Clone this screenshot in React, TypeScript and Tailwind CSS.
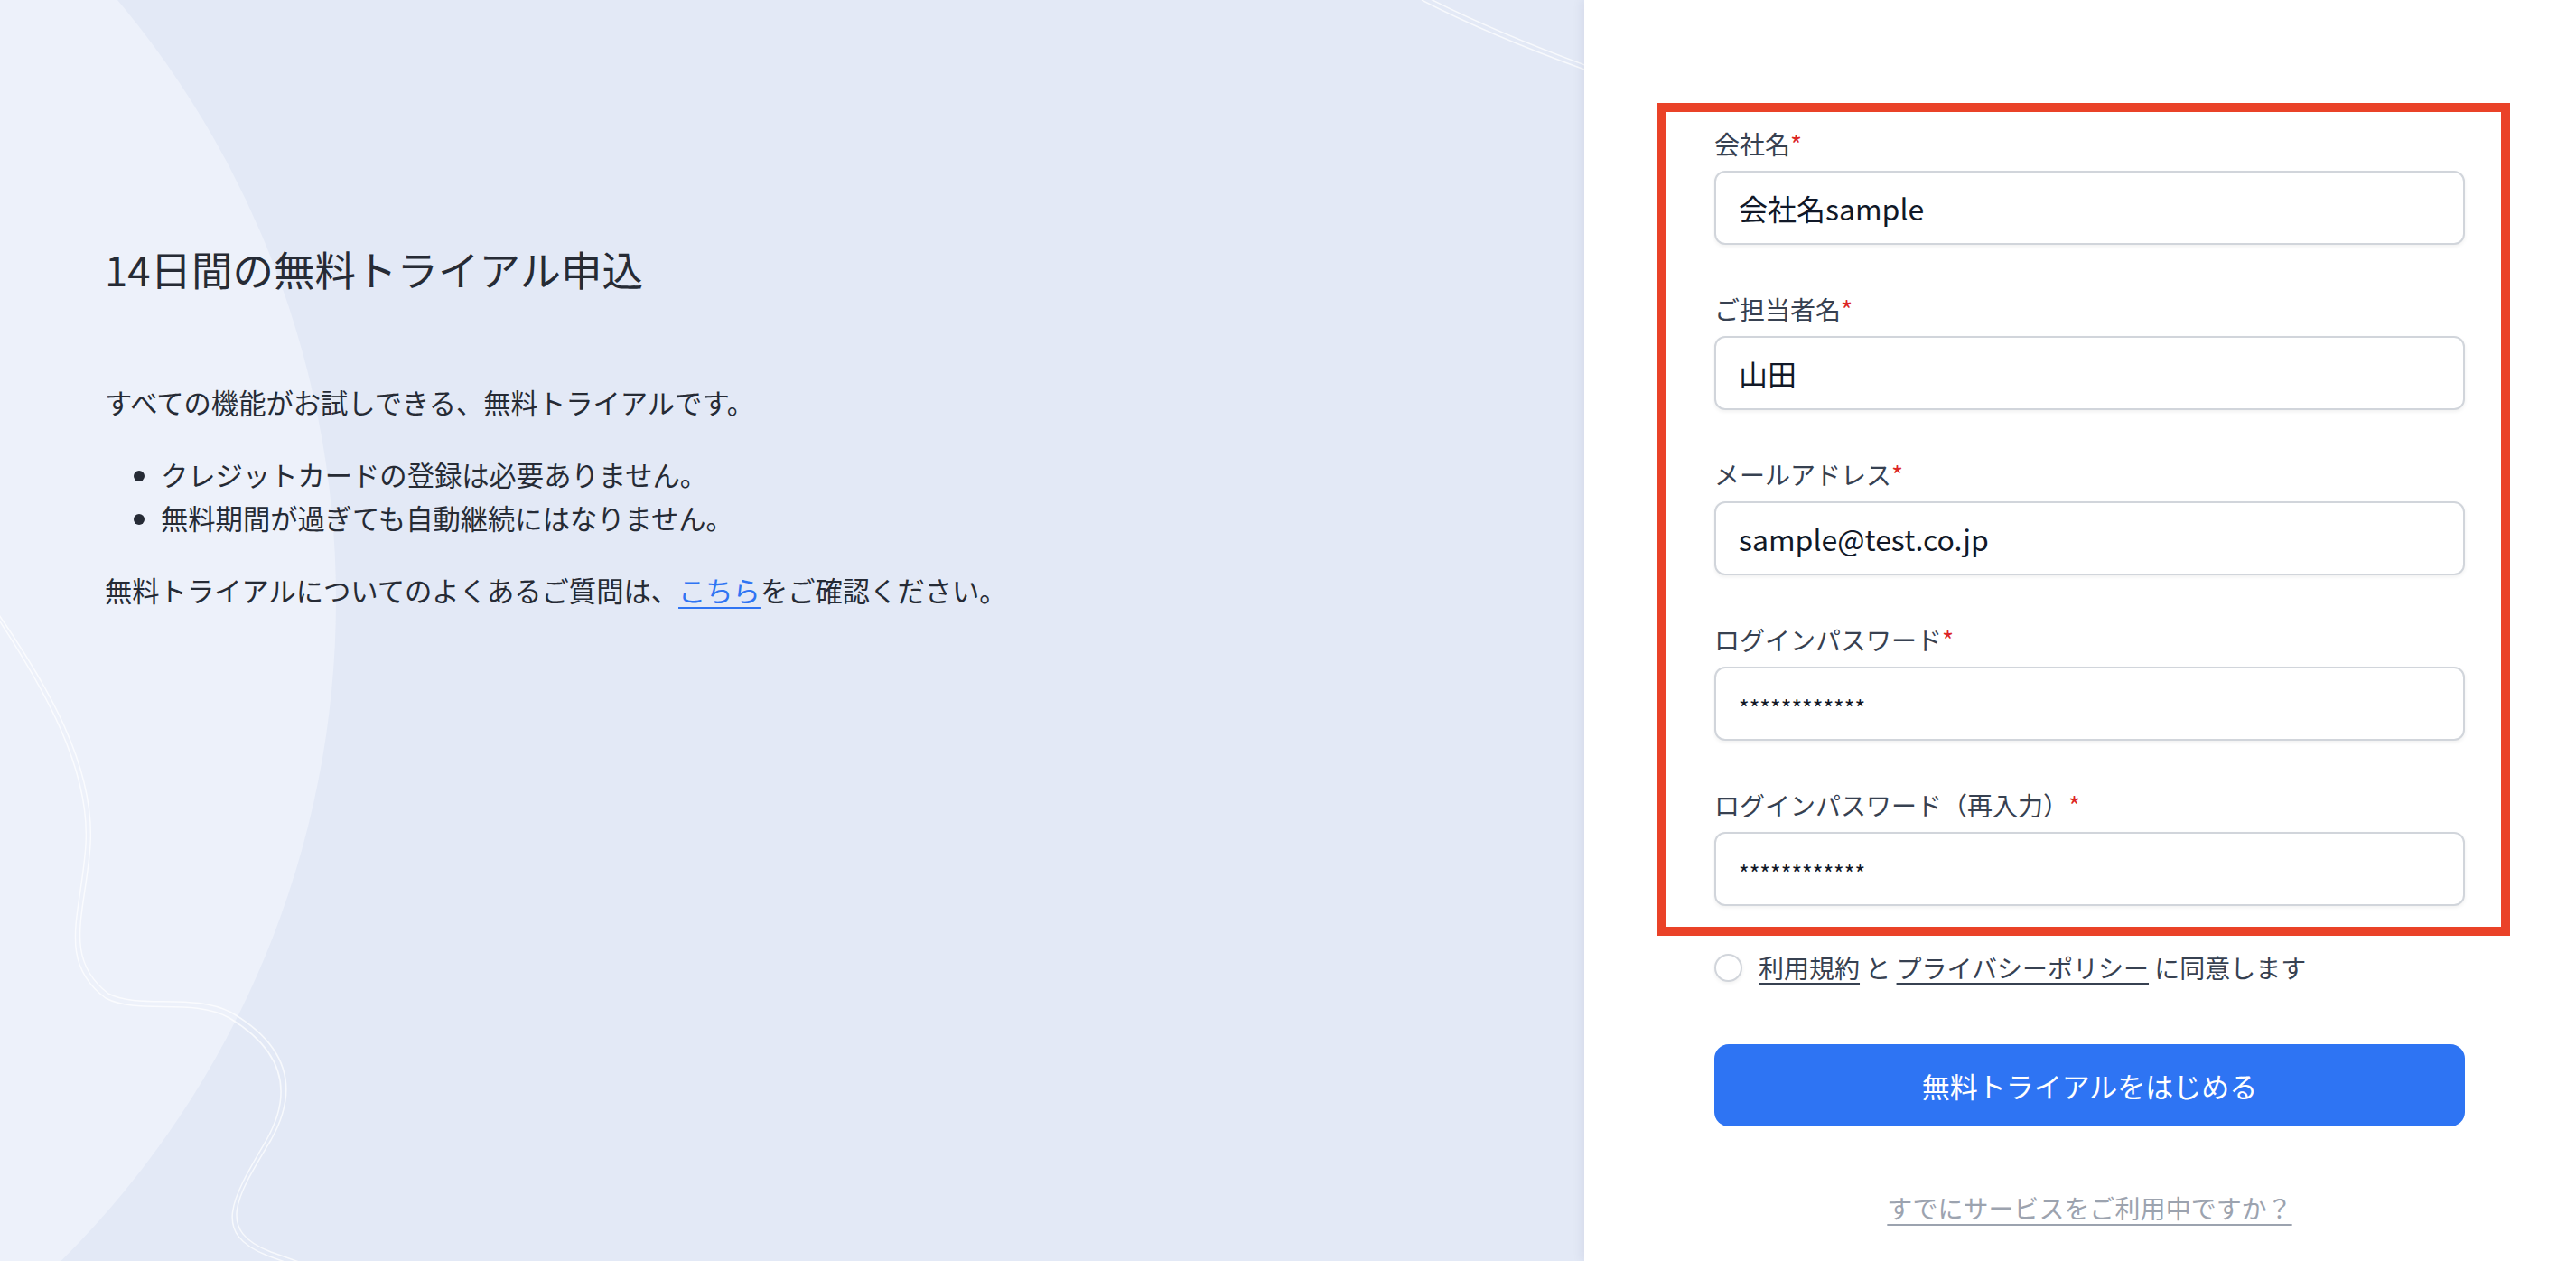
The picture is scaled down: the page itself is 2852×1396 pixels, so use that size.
import React from "react";

const fields: { label: string; value: string; secret?: boolean }[] = [
  { label: "会社名", value: "会社名sample" },
  { label: "ご担当者名", value: "山田" },
  { label: "メールアドレス", value: "sample@test.co.jp" },
  { label: "ログインパスワード", value: "************", secret: true },
  { label: "ログインパスワード（再入力）", value: "************", secret: true },
];

function Decoration() {
  return (
    <svg
      className="absolute inset-0 pointer-events-none"
      width="1754"
      height="1396"
      viewBox="0 0 1754 1396"
      fill="none"
    >
      <circle cx="-660" cy="664" r="1032" fill="#edf1fa" />
      <g stroke="#ffffff" strokeOpacity="0.7" strokeWidth="1.5" fill="none">
        <path d="M -10 668 C 55 760, 105 850, 100 935 C 95 1010, 68 1060, 120 1100 C 155 1118, 215 1098, 258 1122 C 318 1158, 332 1205, 300 1262 C 262 1325, 238 1362, 300 1386 L 345 1402" />
        <path d="M -10 673 C 50 763, 100 852, 95 935 C 90 1012, 62 1064, 117 1105 C 153 1124, 213 1104, 254 1127 C 312 1162, 326 1207, 295 1262 C 257 1327, 233 1365, 296 1390 L 340 1406" />
        <path d="M 1578 -4 C 1640 28, 1700 52, 1760 74" />
        <path d="M 1574 0 C 1636 32, 1696 56, 1760 79" />
      </g>
    </svg>
  );
}

export default function App() {
  return (
    <div className="flex w-full h-[1396px] overflow-hidden font-['Noto_Sans_CJK_JP','Noto_Sans',sans-serif]">
      {/* Left panel */}
      <div className="relative w-[1754px] shrink-0 h-full bg-[#e3e9f6] overflow-hidden">
        <Decoration />
        <div className="relative pl-[116px] pt-[265px] text-[#262b35]">
          <h1 className="text-[45.5px] leading-[64px] font-normal">14日間の無料トライアル申込</h1>
          <p className="mt-[92px] text-[30.3px] leading-[48px]">
            すべての機能がお試しできる、無料トライアルです。
          </p>
          <ul className="mt-[32px] list-disc pl-[62px] text-[30.3px] leading-[48px]">
            <li>クレジットカードの登録は必要ありません。</li>
            <li>無料期間が過ぎても自動継続にはなりません。</li>
          </ul>
          <p className="mt-[32px] text-[30.3px] leading-[48px]">
            無料トライアルについてのよくあるご質問は、
            <a className="text-[#2f74f3] underline underline-offset-[6px] decoration-2">こちら</a>
            をご確認ください。
          </p>
        </div>
      </div>

      {/* Right panel */}
      <div className="relative flex-1 h-full bg-white shadow-[-4px_0_10px_rgba(30,41,80,0.06)]">
        <div className="ml-[144px] w-[831px] pt-[114px]">
          <div className="-ml-[64px] -mr-[50px] border-[10px] border-[#ea4228] pl-[54px] pr-[40px] pt-[15px] pb-[23px]">
            <div className="flex flex-col gap-[51px]">
              {fields.map((f) => (
                <div key={f.label} className="flex flex-col">
                  <label className="h-[40px] text-[28px] leading-[40px] text-[#374151]">
                    {f.label}
                    <span className="text-[#dc2626]">*</span>
                  </label>
                  <div className="mt-[10px] h-[82px] flex items-center rounded-[12px] border-2 border-[#d1d5db] bg-white px-[25px] shadow-[0_2px_4px_rgba(0,0,0,0.06)] text-[#111827]">
                    {f.secret ? (
                      <span className="pt-[8px] text-[25px] leading-none tracking-[0px] text-[#111827]">
                        {f.value}
                      </span>
                    ) : (
                      <span className="text-[32px] leading-[48px]">{f.value}</span>
                    )}
                  </div>
                </div>
              ))}
            </div>
          </div>

          <div className="mt-[15px] h-[40px] flex items-center gap-[18px] text-[28px] leading-[40px] text-[#374151]">
            <span className="w-[31px] h-[31px] rounded-full border-2 border-[#d1d5db] bg-white shadow-[0_2px_4px_rgba(0,0,0,0.06)] shrink-0" />
            <span>
              <a className="underline underline-offset-[5px] decoration-2">利用規約</a>
              {" と "}
              <a className="underline underline-offset-[5px] decoration-2">プライバシーポリシー</a>
              {" に同意します"}
            </span>
          </div>

          <button className="mt-[65px] h-[91px] w-full rounded-[16px] bg-[#2e74f3] text-white text-[31px] leading-[48px]">
            無料トライアルをはじめる
          </button>

          <div className="mt-[70px] text-center">
            <a className="text-[28px] leading-[40px] text-[#9ca3af] underline underline-offset-[6px] decoration-2">
              すでにサービスをご利用中ですか？
            </a>
          </div>
        </div>
      </div>
    </div>
  );
}
